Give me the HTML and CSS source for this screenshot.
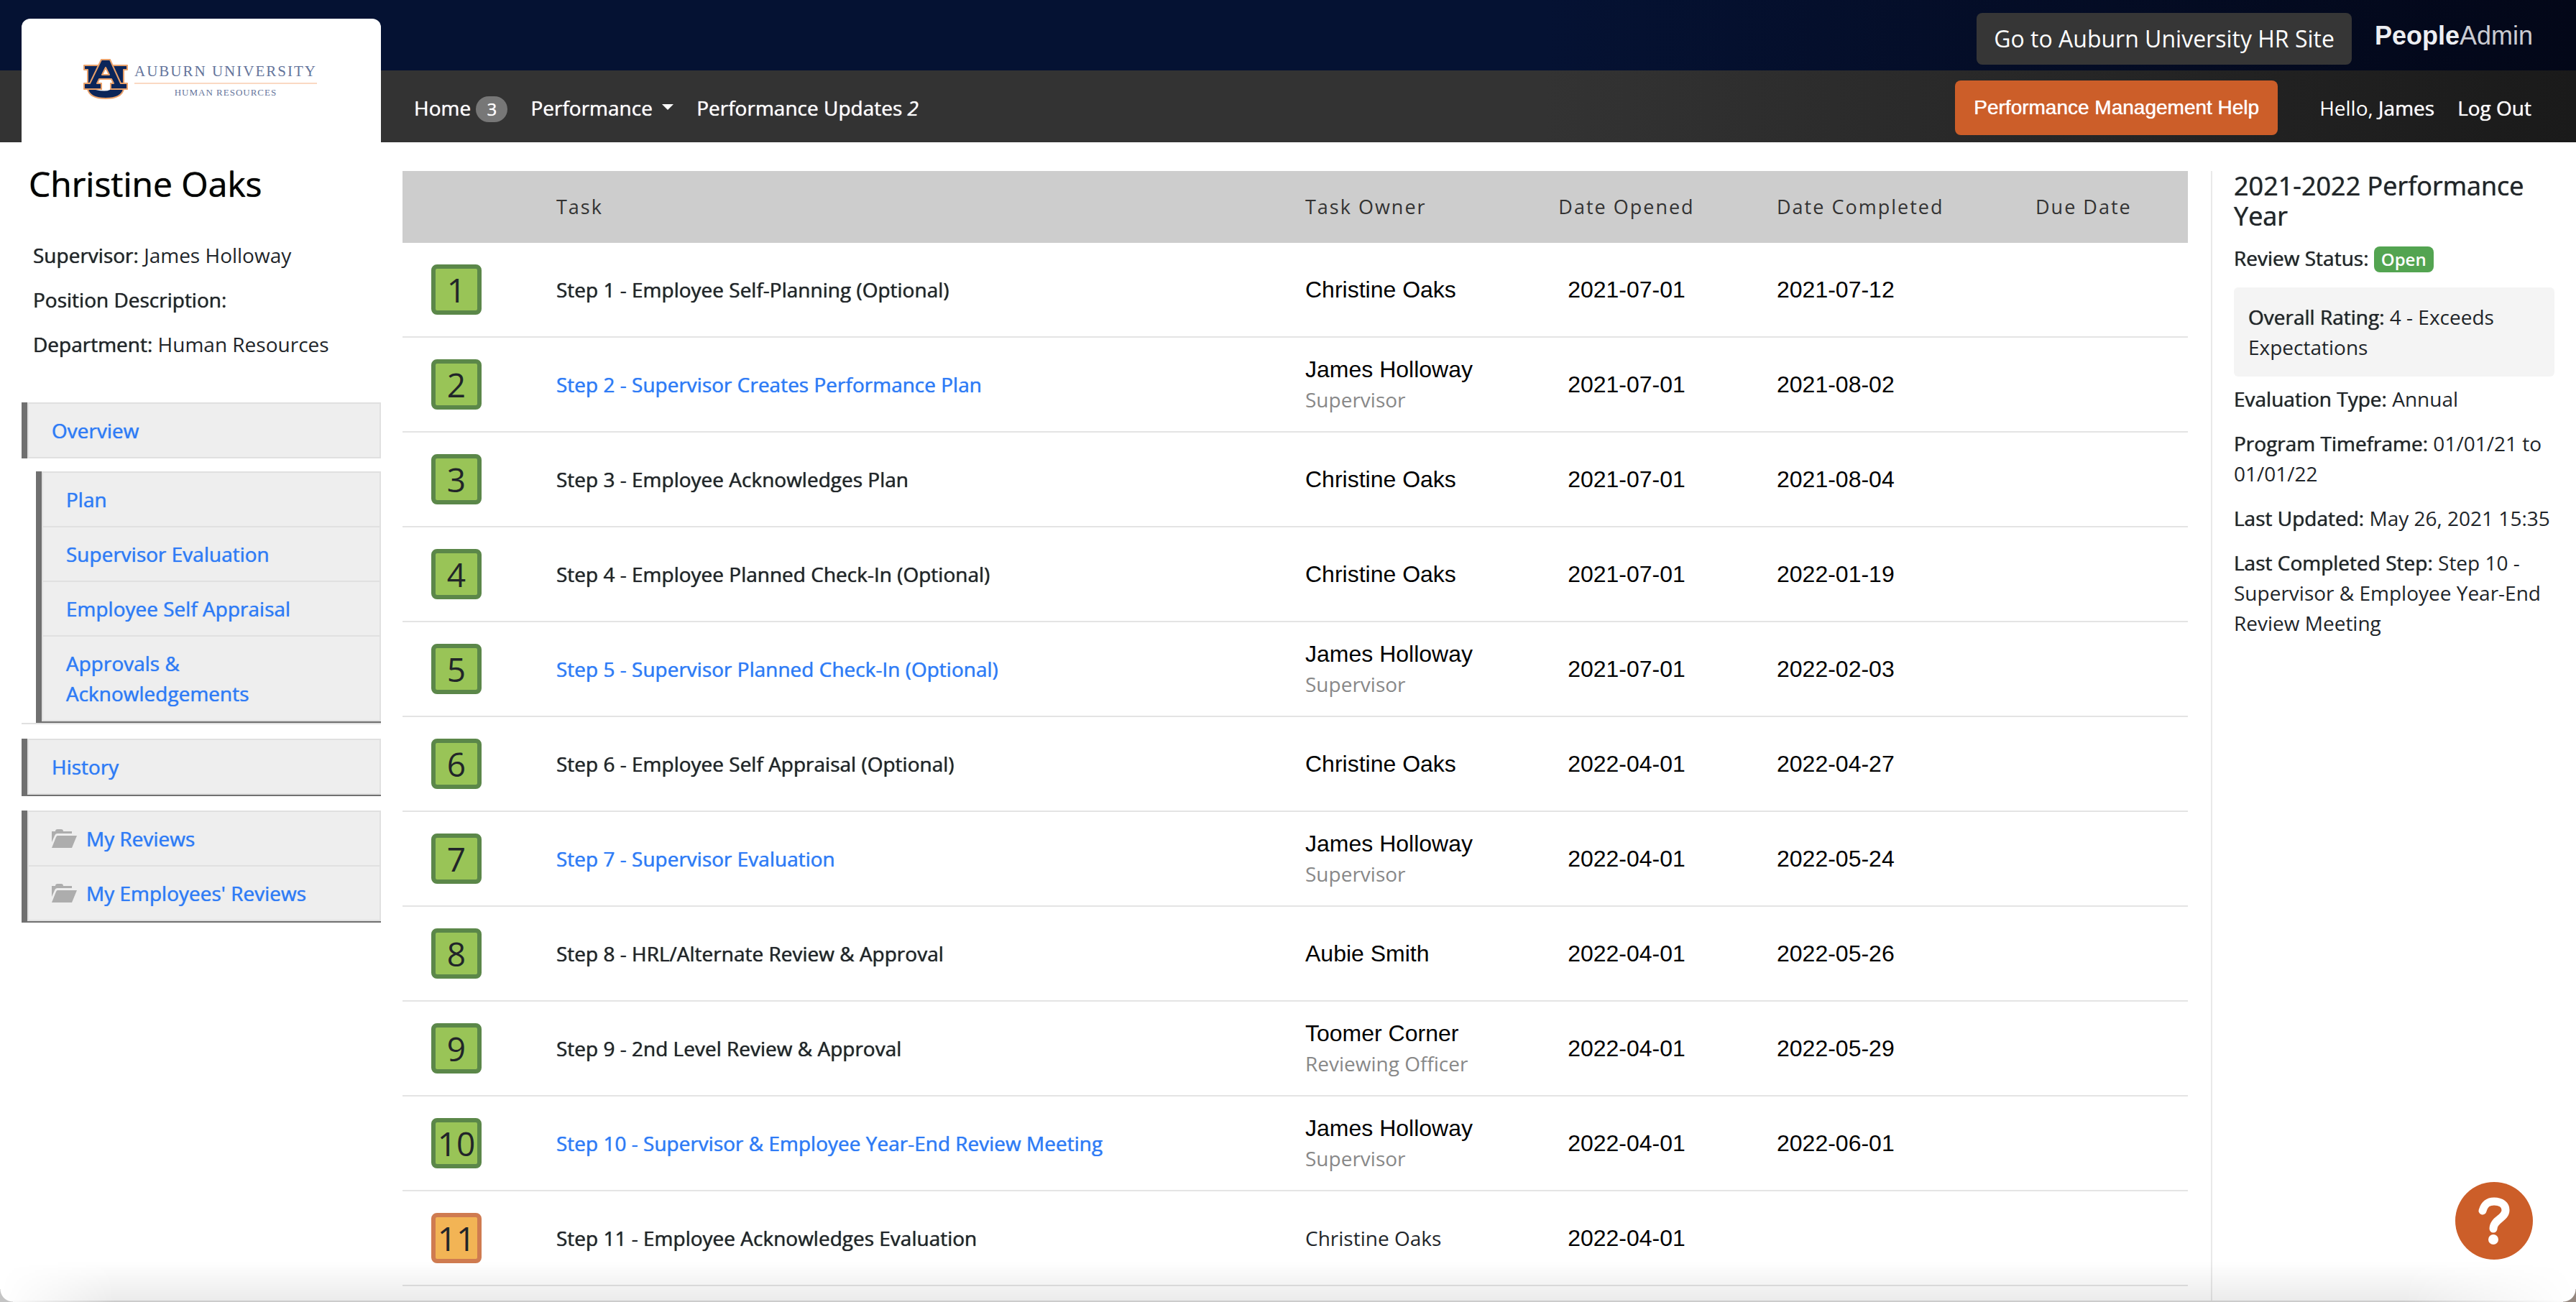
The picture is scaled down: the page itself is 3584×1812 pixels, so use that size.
FILE: index.html
```html
<!DOCTYPE html>
<html lang="en">
<head>
    <meta charset="UTF-8">
    <meta name="viewport" content="width=device-width, initial-scale=1.0">
    <title>PeopleAdmin - Performance Review</title>
    <link rel="stylesheet" href="styles.css">
</head>
<body>
    <header class="header">
        <div class="logo-card">
            <svg class="logo-au" viewBox="0 0 62 56" aria-hidden="true">
                <g fill="#0b2559" stroke="#e8a06a" stroke-width="2" stroke-linejoin="round">
                    <path d="M6 42H56C54 51 44 55 31 55C18 55 8 51 6 42Z"/>
                    <path d="M1 9H22V15L13 36H6V15H1ZM40 9H61V15H56V36H49L40 15Z"/>
                    <path fill-rule="evenodd" d="M25 1H37L52 34H61V42H38V34H42L39 28H22L19 34H25V42H1V34H9ZM31 12L26 22H36Z"/>
                </g>
                <path fill="#fff" d="M26 31H37V43Q31 46 17 43H26Z"/>
            </svg>
            <div class="logo-text">
                <span class="logo-name">AUBURN UNIVERSITY</span>
                <span class="logo-sub">HUMAN RESOURCES</span>
            </div>
        </div>
        <div class="top-bar">
            <a class="btn-site" href="#">Go to Auburn University HR Site</a>
            <span class="brand"><b>People</b>Admin</span>
        </div>
        <nav class="nav-bar">
            <a href="#">Home <span class="count">3</span></a>
            <a href="#">Performance <span class="caret"></span></a>
            <a href="#">Performance Updates <i>2</i></a>
            <div class="nav-right">
                <a class="btn-help" href="#">Performance Management Help</a>
                <span class="hello">Hello, <strong>James</strong></span>
                <a href="#">Log Out</a>
            </div>
        </nav>
    </header>

    <div class="page">
        <aside class="sidebar">
            <h1>Christine Oaks</h1>
            <div class="employee">
                <p><strong>Supervisor:</strong> James Holloway</p>
                <p><strong>Position Description:</strong></p>
                <p><strong>Department:</strong> Human Resources</p>
            </div>
            <ul class="menu menu-top">
                <li><a href="#">Overview</a></li>
            </ul>
            <div class="submenu">
                <ul class="menu">
                    <li><a href="#">Plan</a></li>
                    <li><a href="#">Supervisor Evaluation</a></li>
                    <li><a href="#">Employee Self Appraisal</a></li>
                    <li><a href="#">Approvals &amp; Acknowledgements</a></li>
                </ul>
            </div>
            <ul class="menu">
                <li><a href="#">History</a></li>
            </ul>
            <ul class="menu">
                <li><a href="#"><svg class="folder" viewBox="0 0 36 26" aria-hidden="true"><path d="M0 18V3H5Q5 0 8 0H13Q16 0 16 3H28V6H8Q5 6 4 9ZM8 9H35L28 26H0L6 11Q7 9 8 9Z"/></svg>My Reviews</a></li>
                <li><a href="#"><svg class="folder" viewBox="0 0 36 26" aria-hidden="true"><path d="M0 18V3H5Q5 0 8 0H13Q16 0 16 3H28V6H8Q5 6 4 9ZM8 9H35L28 26H0L6 11Q7 9 8 9Z"/></svg>My Employees' Reviews</a></li>
            </ul>
        </aside>

        <main class="content">
            <table class="tasks">
                <colgroup>
                    <col class="col-step">
                    <col class="col-task">
                    <col class="col-owner">
                    <col class="col-opened">
                    <col class="col-completed">
                    <col class="col-due">
                </colgroup>
                <thead>
                    <tr>
                        <th></th>
                        <th>Task</th>
                        <th>Task Owner</th>
                        <th class="opened">Date Opened</th>
                        <th>Date Completed</th>
                        <th>Due Date</th>
                    </tr>
                </thead>
                <tbody>
                    <tr>
                        <td><span class="step">1</span></td>
                        <td>Step 1 - Employee Self-Planning (Optional)</td>
                        <td class="owner">Christine Oaks</td>
                        <td class="date opened">2021-07-01</td>
                        <td class="date">2021-07-12</td>
                        <td></td>
                    </tr>
                    <tr>
                        <td><span class="step">2</span></td>
                        <td><a href="#">Step 2 - Supervisor Creates Performance Plan</a></td>
                        <td class="owner">James Holloway<small>Supervisor</small></td>
                        <td class="date opened">2021-07-01</td>
                        <td class="date">2021-08-02</td>
                        <td></td>
                    </tr>
                    <tr>
                        <td><span class="step">3</span></td>
                        <td>Step 3 - Employee Acknowledges Plan</td>
                        <td class="owner">Christine Oaks</td>
                        <td class="date opened">2021-07-01</td>
                        <td class="date">2021-08-04</td>
                        <td></td>
                    </tr>
                    <tr>
                        <td><span class="step">4</span></td>
                        <td>Step 4 - Employee Planned Check-In (Optional)</td>
                        <td class="owner">Christine Oaks</td>
                        <td class="date opened">2021-07-01</td>
                        <td class="date">2022-01-19</td>
                        <td></td>
                    </tr>
                    <tr>
                        <td><span class="step">5</span></td>
                        <td><a href="#">Step 5 - Supervisor Planned Check-In (Optional)</a></td>
                        <td class="owner">James Holloway<small>Supervisor</small></td>
                        <td class="date opened">2021-07-01</td>
                        <td class="date">2022-02-03</td>
                        <td></td>
                    </tr>
                    <tr>
                        <td><span class="step">6</span></td>
                        <td>Step 6 - Employee Self Appraisal (Optional)</td>
                        <td class="owner">Christine Oaks</td>
                        <td class="date opened">2022-04-01</td>
                        <td class="date">2022-04-27</td>
                        <td></td>
                    </tr>
                    <tr>
                        <td><span class="step">7</span></td>
                        <td><a href="#">Step 7 - Supervisor Evaluation</a></td>
                        <td class="owner">James Holloway<small>Supervisor</small></td>
                        <td class="date opened">2022-04-01</td>
                        <td class="date">2022-05-24</td>
                        <td></td>
                    </tr>
                    <tr>
                        <td><span class="step">8</span></td>
                        <td>Step 8 - HRL/Alternate Review &amp; Approval</td>
                        <td class="owner">Aubie Smith</td>
                        <td class="date opened">2022-04-01</td>
                        <td class="date">2022-05-26</td>
                        <td></td>
                    </tr>
                    <tr>
                        <td><span class="step">9</span></td>
                        <td>Step 9 - 2nd Level Review &amp; Approval</td>
                        <td class="owner">Toomer Corner<small>Reviewing Officer</small></td>
                        <td class="date opened">2022-04-01</td>
                        <td class="date">2022-05-29</td>
                        <td></td>
                    </tr>
                    <tr>
                        <td><span class="step">10</span></td>
                        <td><a href="#">Step 10 - Supervisor &amp; Employee Year-End Review Meeting</a></td>
                        <td class="owner">James Holloway<small>Supervisor</small></td>
                        <td class="date opened">2022-04-01</td>
                        <td class="date">2022-06-01</td>
                        <td></td>
                    </tr>
                    <tr>
                        <td><span class="step step-open">11</span></td>
                        <td>Step 11 - Employee Acknowledges Evaluation</td>
                        <td>Christine Oaks</td>
                        <td class="date opened">2022-04-01</td>
                        <td></td>
                        <td></td>
                    </tr>
                </tbody>
            </table>
        </main>

        <aside class="details">
            <h2>2021-2022 Performance Year</h2>
            <p><strong>Review Status:</strong> <span class="status">Open</span></p>
            <p class="rating"><strong>Overall Rating:</strong> 4 - Exceeds Expectations</p>
            <p><strong>Evaluation Type:</strong> Annual</p>
            <p><strong>Program Timeframe:</strong> 01/01/21 to 01/01/22</p>
            <p><strong>Last Updated:</strong> May 26, 2021 15:35</p>
            <p><strong>Last Completed Step:</strong> Step 10 - Supervisor &amp; Employee Year-End Review Meeting</p>
        </aside>
    </div>

    <button class="help-button" type="button" aria-label="Help">
        <svg viewBox="0 0 108 108" aria-hidden="true">
            <path d="M38 40C41 30 46 27 54 27C64 27 70 32 70 39C70 51 53 52 53 65" fill="none" stroke="#fff" stroke-width="11" stroke-linecap="round"/>
            <circle cx="53" cy="80" r="7" fill="#fff"/>
        </svg>
    </button>
    <div class="bottom-shade"></div>
    <div class="corners"></div>
</body>
</html>
```
FILE: styles.css
```css
* {
    box-sizing: border-box;
}
body {
    margin: 0;
    min-height: 100vh;
    display: flex;
    flex-direction: column;
    font-family: "Open Sans", sans-serif;
    font-size: 28px;
    line-height: 42px;
    color: #212529;
    background: #fff;
}
strong {
    font-weight: 500;
}
a {
    color: #2f7bf6;
    text-decoration: none;
}
p {
    margin: 0 0 20px;
}
/* a little extra weight for labels, links and headings */
strong,
h1,
h2,
.nav-bar > a,
.nav-right a,
.menu a,
.tasks td:nth-child(2) {
    text-shadow: 0 0 1px currentColor;
}

/* header */
.header {
    display: grid;
    grid-template-columns: 500px 1fr;
    grid-template-rows: 98px 100px;
    padding-left: 30px;
    background: linear-gradient(to right, #333 60%, #1a1a1a) 0 98px no-repeat, linear-gradient(to right, #051233 60%, #030718);
}
.logo-card {
    grid-row: 1 / 3;
    margin-top: 26px;
    padding: 0 86px 4px;
    display: flex;
    align-items: center;
    gap: 9px;
    background: #fff;
    border-radius: 12px 12px 0 0;
}
.logo-au {
    width: 62px;
    height: 56px;
    flex: none;
}
.logo-text {
    display: flex;
    flex-direction: column;
    align-items: center;
    padding-top: 4px;
    font-family: "Liberation Serif", serif;
    color: #64749b;
    white-space: nowrap;
}
.logo-name {
    font-size: 21px;
    line-height: 32px;
    letter-spacing: 2px;
    border-bottom: 2px solid #fad9c3;
}
.logo-sub {
    font-size: 13px;
    line-height: 24px;
    letter-spacing: 1px;
}
.top-bar {
    display: flex;
    align-items: center;
    justify-content: flex-end;
    gap: 32px;
    padding: 10px 60px 0 0;
}
.btn-site {
    padding: 15px 24px;
    font-size: 32px;
    border-radius: 8px;
    background: #363636;
    color: #fff;
}
.brand {
    padding-bottom: 8px;
    font-family: "Liberation Sans", Arial, sans-serif;
    font-size: 36px;
    color: #c9cbd2;
}
.brand b {
    color: #eceef2;
}
.nav-bar {
    display: flex;
    align-items: center;
    gap: 32px;
    padding: 4px 62px 0 46px;
    color: #fff;
    font-weight: 500;
}
.nav-bar a {
    color: #fff;
}
.count {
    display: inline-block;
    width: 44px;
    line-height: 36px;
    font-size: 24px;
    text-align: center;
    border-radius: 18px;
    background: #777;
}
.caret {
    display: inline-block;
    margin-left: 6px;
    vertical-align: 8px;
    border: 8px solid transparent;
    border-top-color: #fff;
    border-bottom: 0;
}
.nav-right {
    display: flex;
    align-items: center;
    gap: 32px;
    margin-left: auto;
}
.nav-right .btn-help {
    margin-right: 26px;
    padding: 17px 26px;
    font-family: "Liberation Sans", Arial, sans-serif;
    border-radius: 8px;
    background: #cc5e29;
}
.hello {
    font-weight: 400;
}

/* page columns */
.page {
    flex: 1;
    display: grid;
    grid-template-columns: 500px 1fr 508px;
    gap: 30px;
    padding-left: 30px;
}
.sidebar h1 {
    margin: 28px 10px 48px;
    font-size: 48px;
    line-height: 60px;
    font-weight: 500;
    color: #000;
}
.employee {
    padding-left: 16px;
    margin-bottom: 60px;
}
.menu {
    list-style: none;
    margin: 0 0 20px;
    padding: 0;
    border-left: 8px solid #707070;
    border-bottom: 2px solid #707070;
    background: #eee;
    font-weight: 500;
}
.menu li {
    border: 2px solid #e0e0e0;
    border-bottom: 0;
}
.menu li:last-child {
    border-bottom: 2px solid #e0e0e0;
}
.menu a {
    display: flex;
    align-items: center;
    gap: 12px;
    padding: 16px 60px 16px 32px;
}
.menu-top {
    margin-bottom: 18px;
    border-bottom: 0;
}
.submenu {
    margin-bottom: 20px;
    padding-left: 20px;
    border-bottom: 2px solid #e0e0e0;
}
.submenu .menu {
    margin: 0;
}
.folder {
    width: 36px;
    height: 26px;
    fill: #adadad;
}

/* task table */
.content {
    padding: 40px 2px 0 0;
}
.tasks {
    width: 100%;
    table-layout: fixed;
    border-collapse: separate;
    border-spacing: 0;
}
.col-step {
    width: 214px;
}
.col-owner {
    width: 238px;
}
.col-opened {
    width: 418px;
}
.col-completed {
    width: 360px;
}
.col-due {
    width: 212px;
}
.tasks th {
    height: 100px;
    padding: 0;
    text-align: left;
    font-size: 27px;
    font-weight: 500;
    letter-spacing: 2px;
    color: #333;
    background: #cdcdcd;
}
.tasks td {
    height: 132px;
    padding: 0;
    border-bottom: 2px solid #e4e4e4;
    font-weight: 500;
}
.tasks .opened {
    text-align: center;
}
.tasks .date,
.tasks .owner {
    font-family: "Liberation Sans", Arial, sans-serif;
    font-size: 32px;
    font-weight: 400;
    color: #000;
}
.owner small {
    display: block;
    font-family: "Open Sans", sans-serif;
    font-size: 28px;
    color: #888;
}
.step {
    display: block;
    width: 70px;
    height: 70px;
    margin-left: 40px;
    border: 6px solid #5b8749;
    border-radius: 8px;
    background: #99c457;
    font-size: 46px;
    line-height: 58px;
    font-weight: 400;
    text-align: center;
}
.step-open {
    border-color: #cf7b50;
    background: #f2b455;
}

/* review details */
.details {
    margin-top: 40px;
    padding: 0 30px;
    border-left: 2px solid #e9e9e9;
}
.details h2 {
    margin: 0 0 16px;
    font-size: 36px;
    line-height: 42px;
    font-weight: 500;
}
.status {
    display: inline-block;
    padding: 0 10px;
    font-size: 24px;
    line-height: 36px;
    font-weight: 600;
    border-radius: 8px;
    background: #53a451;
    color: #fff;
}
.details .rating {
    margin-bottom: 10px;
    padding: 20px;
    border-radius: 6px;
    background: #f4f4f4;
}
.help-button {
    position: fixed;
    right: 60px;
    bottom: 59px;
    width: 108px;
    height: 108px;
    padding: 0;
    border: 0;
    border-radius: 50%;
    background: #cc5e29;
    cursor: pointer;
}

/* window edge */
.bottom-shade {
    position: fixed;
    left: 0;
    right: 0;
    bottom: 0;
    height: 56px;
    border-bottom: 2px solid #ccc;
    background: linear-gradient(rgba(0, 0, 0, 0), rgba(0, 0, 0, 0.08));
    mask-image: linear-gradient(to right, transparent, #000 160px, #000 calc(100% - 240px), transparent);
    pointer-events: none;
}
.corners {
    position: fixed;
    left: 0;
    right: 0;
    bottom: 0;
    height: 18px;
    background:
        radial-gradient(circle at 100% 0, transparent 17px, #c4c4c4 18px) left / 18px 18px no-repeat,
        radial-gradient(circle at 0 0, transparent 17px, #94877f 18px) right / 18px 18px no-repeat;
    pointer-events: none;
}
```
